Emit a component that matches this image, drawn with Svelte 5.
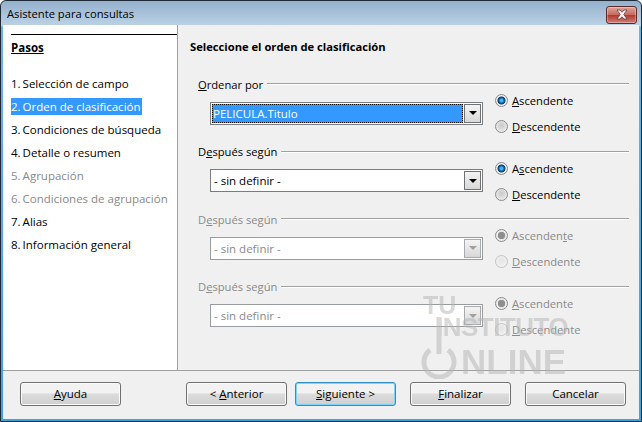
<script lang="ts">
  const steps = [
    { label: 'Selección de campo', n: 1 },
    { label: 'Orden de clasificación', n: 2, active: true },
    { label: 'Condiciones de búsqueda', n: 3 },
    { label: 'Detalle o resumen', n: 4 },
    { label: 'Agrupación', n: 5, disabled: true },
    { label: 'Condiciones de agrupación', n: 6, disabled: true },
    { label: 'Alias', n: 7 },
    { label: 'Información general', n: 8 }
  ]

  const sorts = [
    { pre: '', key: 'O', post: 'rdenar por', value: 'PELICULA.Titulo', focus: true, asc: ['', 'A', 'scendente'] },
    { pre: 'D', key: 'e', post: 'spués según', value: '- sin definir -', asc: ['A', 's', 'cendente'] },
    { pre: 'D', key: 'e', post: 'spués según', value: '- sin definir -', off: true, asc: ['Ascenden', 't', 'e'] },
    { pre: 'D', key: 'e', post: 'spués según', value: '- sin definir -', off: true, asc: ['', 'A', 'scendente'] }
  ]
</script>

<div class="window">
  <div class="titlebar">
    <span>Asistente para consultas</span>
    <button class="close" aria-label="Cerrar">
      <svg width="16" height="11" viewBox="0 0 16 11">
        <path d="M3 1h3l2 2.2L10 1h3L9.8 5.5 13 10h-3L8 7.8 6 10H3l3.2-4.5z" fill="#f4f4f4" stroke="#6b3a36" stroke-width="0.8" />
      </svg>
    </button>
  </div>

  <div class="inner">
    <div class="main">
      <aside class="steps">
        <div class="steps-head">Pasos</div>
        <ol>
          {#each steps as s}
            <li class:active={s.active} class:disabled={s.disabled}>
              <span class="txt">{s.n}.<i></i>{s.label}</span>
            </li>
          {/each}
        </ol>
      </aside>

      <section class="content">
        <h2>Seleccione el orden de clasificación</h2>
        {#each sorts as s}
          <div class="group" class:off={s.off}>
            <div class="legend">
              <span>{s.pre}<u>{s.key}</u>{s.post}</span>
              <div class="rule"></div>
            </div>
            <div class="row">
              <div class="select">
                <div class="value" class:focus={s.focus}><span>{s.value}</span></div>
                <div class="arrow"><b></b></div>
              </div>
              <div class="radios">
                <label>
                  <span class="radio on"></span>
                  <span>{s.asc[0]}<u>{s.asc[1]}</u>{s.asc[2]}</span>
                </label>
                <label>
                  <span class="radio"></span>
                  <span><u>D</u>escendente</span>
                </label>
              </div>
            </div>
          </div>
        {/each}
      </section>
    </div>

    <div class="footer">
      <button class="btn"><u>A</u>yuda</button>
      <button class="btn prev">&lt; <u>A</u>nterior</button>
      <button class="btn default"><u>S</u>iguiente &gt;</button>
      <button class="btn next"><u>F</u>inalizar</button>
      <button class="btn next">Cancelar</button>
    </div>
  </div>

  <div class="watermark" aria-hidden="true">
    <div class="tu">TU</div>
    <div class="inst">INSTITUTO</div>
    <div class="online">NLINE</div>
    <svg class="power" width="38" height="62" viewBox="0 0 38 62">
      <path d="M10 33a15 15 0 1 0 18 0" fill="none" stroke="currentColor" stroke-width="5" />
      <rect x="16.5" y="0" width="5" height="37" fill="currentColor" />
    </svg>
  </div>
</div>

<style>
  :global(body) {
    margin: 0;
    background: #fff;
  }
  .window {
    position: relative;
    width: 642px;
    height: 422px;
    box-sizing: border-box;
    display: flex;
    flex-direction: column;
    padding: 0 2px 2px;
    background: linear-gradient(#95b1cd, #bcd2e6 25px, #6fb4dc 26px, #3fa3d6);
    border: 1px solid #1f2c38;
    border-radius: 6px 6px 0 0;
    font-family: "Open Sans", "Noto Sans", sans-serif;
    font-size: 11.5px;
    color: #000;
    overflow: hidden;
  }
  .titlebar {
    height: 24px;
    flex: none;
    display: flex;
    align-items: center;
    justify-content: space-between;
    padding: 0 2px 0 4px;
    font-size: 11.2px;
  }
  .close {
    width: 31px;
    height: 18px;
    margin-top: 3px;
    padding: 0;
    border: 1px solid #5c2a27;
    border-radius: 3px;
    background: linear-gradient(#dba59d, #c96a60 48%, #b0392f 52%, #cf8177);
    box-shadow: inset 0 0 0 1px rgba(255, 255, 255, 0.3);
    display: flex;
    align-items: center;
    justify-content: center;
  }
  .inner {
    flex: 1;
    display: flex;
    flex-direction: column;
    background: #f0f0f0;
    min-height: 0;
  }
  .main {
    height: 346px;
    flex: none;
    display: flex;
    border-bottom: 1px solid #a0a0a0;
    box-sizing: border-box;
  }
  .steps {
    width: 175px;
    flex: none;
    box-sizing: border-box;
    background: #fff;
    border-right: 1px solid #a0a0a0;
    padding: 9px 0 0 8px;
  }
  .steps-head {
    border-top: 1px solid #000;
    padding-top: 5px;
    line-height: 16px;
    font-weight: 700;
    text-decoration: underline;
  }
  ol {
    list-style: none;
    margin: 19px 0 0;
    padding: 0;
  }
  li {
    height: 23px;
    line-height: 17px;
  }
  li .txt {
    display: inline-block;
    padding-right: 1px;
  }
  li i {
    display: inline-block;
    width: 2px;
  }
  li.active .txt {
    background: #3399ff;
    color: #fff;
  }
  li.disabled {
    color: #8a8a8a;
  }
  .content {
    flex: 1;
    padding: 14px 0 0 12px;
    min-width: 0;
  }
  h2 {
    margin: 0 0 21px;
    font-size: 11.2px;
    line-height: 16px;
    font-weight: 700;
  }
  .group {
    height: 67.5px;
  }
  .group.off {
    color: #8a8a8a;
  }
  .legend {
    display: flex;
    align-items: center;
    gap: 4px;
    height: 16px;
    margin-left: 8px;
    margin-right: 10px;
    font-size: 11.2px;
  }
  .rule {
    flex: 1;
    border-top: 1px solid #a0a0a0;
    border-bottom: 1px solid #fff;
  }
  .row {
    display: flex;
    margin-left: 20px;
  }
  .select {
    width: 273px;
    height: 23px;
    margin-top: 9.9px;
    box-sizing: border-box;
    background: #fff;
    border: 1px solid #7a7d80;
    display: flex;
    padding: 1px;
    flex: none;
  }
  .off .select {
    border-color: #9a9da0;
  }
  .value {
    flex: 1;
    line-height: 19px;
    padding-left: 2px;
    overflow: hidden;
  }
  .value.focus {
    padding-left: 1px;
    background: #3399ff;
    color: #fff;
    outline: 1px dotted #000;
    outline-offset: -1px;
  }
  .arrow {
    width: 17px;
    margin-left: 1px;
    box-sizing: border-box;
    border: 1px solid #6f7275;
    background: linear-gradient(#f4f4f4, #d8d8d8);
    display: flex;
    align-items: center;
    justify-content: center;
  }
  .off .arrow {
    border-color: #a8abae;
  }
  .arrow b {
    width: 0;
    height: 0;
    border: 4px solid transparent;
    border-top: 4px solid #000;
    border-bottom: 0;
  }
  .off .arrow b {
    border-top-color: #a0a0a0;
  }
  .radios {
    margin-left: 12px;
    margin-top: 0.5px;
    display: flex;
    flex-direction: column;
    gap: 10px;
    font-size: 11.2px;
  }
  label {
    display: flex;
    align-items: center;
    gap: 4px;
    height: 16px;
  }
  .radio {
    width: 11px;
    height: 11px;
    border: 1px solid #8b8b8b;
    border-radius: 50%;
    background: radial-gradient(circle at 50% 40%, #c8c8c8, #f6f6f6);
    flex: none;
  }
  .radio.on {
    background: radial-gradient(circle, #4fb4ec 0 1.2px, #0f6ab0 2.4px, #0b3f68 3.6px, #eaeaea 4.4px, #f4f4f4);
  }
  .off .radio {
    border-color: #c4c4c4;
    background: radial-gradient(circle at 50% 40%, #e4e4e4, #f6f6f6);
  }
  .off .radio.on {
    border-color: #8b8b8b;
    background: radial-gradient(circle, #8e8e8e 0 3.4px, #e8e8e8 4px, #f4f4f4);
  }
  .watermark {
    position: absolute;
    left: 419px;
    top: 292px;
    width: 160px;
    height: 84px;
    color: #b4b4b4;
    opacity: 0.5;
    font-family: "Liberation Sans", Arial, sans-serif;
    font-weight: 700;
    line-height: 1;
    pointer-events: none;
    filter: blur(0.4px);
  }
  .tu {
    font-size: 25px;
    margin-left: 3px;
    height: 21px;
  }
  .inst {
    font-size: 26px;
    letter-spacing: -0.5px;
    margin-left: 16px;
    height: 30px;
  }
  .online {
    font-size: 35px;
    margin-left: 41px;
  }
  .power {
    position: absolute;
    left: 0;
    top: 24px;
  }
  .footer {
    flex: 1;
    display: flex;
    align-items: center;
    padding: 0 13px 3px 17px;
  }
  .btn {
    width: 101px;
    height: 24px;
    padding: 0;
    border: 1px solid #707070;
    border-radius: 3px;
    background: linear-gradient(#f2f2f2 0 45%, #dcdcdc 50%, #cfcfcf);
    box-shadow: inset 0 0 0 1px #fbfbfb;
    font: inherit;
    color: #000;
  }
  .btn.prev {
    margin-left: 65px;
  }
  .btn.default {
    margin-left: 8px;
    border-color: #2f8fc4;
    box-shadow: inset 0 0 0 1px #7fd3f5;
  }
  .btn.next {
    margin-left: 14px;
  }
</style>
